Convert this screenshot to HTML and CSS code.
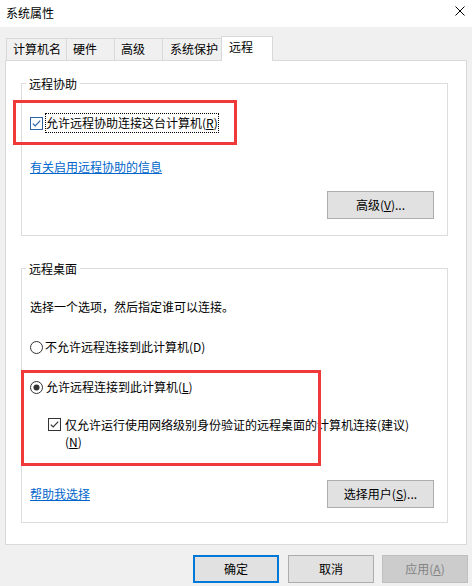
FILE: index.html
```html
<!DOCTYPE html>
<html lang="zh-CN">
<head>
<meta charset="utf-8">
<title>系统属性</title>
<link rel="stylesheet" href="styles.css">
</head>
<body>
<div class="window">
  <header class="titlebar">
    <span class="title">系统属性</span>
    <svg class="close" width="10" height="10" viewBox="0 0 10 10"><path d="M0.5 0.5L9.5 9.5M9.5 0.5L0.5 9.5" stroke="#000" stroke-width="1"/></svg>
  </header>

  <nav class="tabs">
    <div class="tab t-name">计算机名</div>
    <div class="tab t-hw">硬件</div>
    <div class="tab t-adv">高级</div>
    <div class="tab t-prot">系统保护</div>
    <div class="tab active">远程</div>
  </nav>

  <main class="panel">
    <fieldset class="group g-assist">
      <legend>远程协助</legend>
      <div class="option check-row">
        <svg class="box" width="13" height="13" viewBox="0 0 13 13"><rect x="0.5" y="0.5" width="12" height="12" fill="#fff" stroke="#2b63a6"/><path d="M2.8 6.6L5.2 9L10.2 3.6" fill="none" stroke="#2b63a6" stroke-width="1.2"/></svg>
        <span class="focus">允许远程协助连接这台计算机(<u>R</u>)</span>
      </div>
      <a class="link link-info" href="#">有关启用远程协助的信息</a>
      <div class="btn-row">
        <button class="btn">高级(<u>V</u>)...</button>
      </div>
    </fieldset>

    <fieldset class="group g-desktop">
      <legend>远程桌面</legend>
      <p class="desc">选择一个选项，然后指定谁可以连接。</p>
      <div class="option radio-row r-off">
        <svg class="box" width="13" height="13" viewBox="0 0 13 13"><circle cx="6.5" cy="6.5" r="6" fill="#fff" stroke="#333"/></svg>
        <span>不允许远程连接到此计算机(D)</span>
      </div>
      <div class="option radio-row r-on">
        <svg class="box" width="13" height="13" viewBox="0 0 13 13"><circle cx="6.5" cy="6.5" r="6" fill="#fff" stroke="#333"/><circle cx="6.5" cy="6.5" r="3" fill="#333"/></svg>
        <span>允许远程连接到此计算机(<u>L</u>)</span>
      </div>
      <div class="option nla-row">
        <svg class="box" width="13" height="13" viewBox="0 0 13 13"><rect x="0.5" y="0.5" width="12" height="12" fill="#fff" stroke="#333"/><path d="M2.8 6.6L5.2 9L10.2 3.6" fill="none" stroke="#333" stroke-width="1.2"/></svg>
        <span class="nla-text">仅允许运行使用网络级别身份验证的远程桌面的计算机连接(建议)<br>(<u>N</u>)</span>
      </div>
      <div class="btn-row split">
        <a class="link" href="#">帮助我选择</a>
        <button class="btn">选择用户(<u>S</u>)...</button>
      </div>
    </fieldset>
  </main>

  <footer class="actions">
    <button class="btn primary">确定</button>
    <button class="btn cancel">取消</button>
    <button class="btn disabled">应用(<u>A</u>)</button>
  </footer>

  <div class="mark mark-assist"></div>
  <div class="mark mark-desktop"></div>
</div>
</body>
</html>
```

FILE: styles.css
```css
* { box-sizing: border-box; }

html, body {
  margin: 0;
  padding: 0;
}

body {
  background: #f0f0f0;
  font-family: "Noto Sans CJK SC", "Microsoft YaHei", sans-serif;
  font-size: 12px;
  line-height: 16px;
  color: #000;
}

.window {
  position: relative;
  width: 472px;
  height: 586px;
  overflow: hidden;
  background: #f0f0f0;
}

.titlebar {
  height: 27px;
  background: #fff;
  display: flex;
  align-items: center;
  justify-content: space-between;
  padding: 0 7px 1px 6px;
}

.title { line-height: 16px; }

.close { display: block; margin-top: -5px; }

.tabs {
  display: flex;
  align-items: flex-end;
  height: 24px;
  margin: 9px 0 0 6px;
}

.tab {
  height: 22px;
  border-top: 1px solid #d9d9d9;
  border-left: 1px solid #d9d9d9;
  padding: 2px 0 0 6px;
  background: #f0f0f0;
  white-space: nowrap;
}

.t-name { width: 60px; }
.t-hw { width: 48px; }
.t-adv { width: 48px; }
.t-prot { width: 59px; padding-left: 7px; }

.tab.active {
  position: relative;
  z-index: 1;
  width: 52px;
  height: 25px;
  margin-bottom: -1px;
  padding: 2px 0 0 7px;
  background: #fff;
  border-right: 1px solid #d9d9d9;
}

.panel {
  display: block;
  margin-left: 5px;
  width: 462px;
  height: 485px;
  background: #fff;
  border: 1px solid #d9d9d9;
  padding: 14px 0 0 15px;
}

.group {
  margin: 0;
  width: 427px;
  border: 1px solid #dcdcdc;
  padding: 0 13px 16px 8px;
  min-width: 0;
}

.group legend {
  padding: 0 3px;
  margin-left: -4px;
  line-height: 17px;
}

.g-desktop {
  margin-top: 24px;
  padding-bottom: 14px;
}

.option {
  display: flex;
  align-items: center;
}

.box { flex: none; display: block; }

.check-row {
  margin-top: 21px;
  height: 20px;
}

.check-row .box { margin-right: 2px; }

.focus {
  border: 1px dotted #000;
  padding: 1px 0 1px 0;
  line-height: 16px;
}

.link {
  color: #0066cc;
  text-decoration: underline;
}

.link-info {
  display: block;
  width: max-content;
  margin-top: 26px;
}

.btn-row {
  display: flex;
  justify-content: flex-end;
  margin-top: 16px;
}

.btn-row.split {
  justify-content: space-between;
  align-items: center;
  margin-top: 30px;
}

.btn {
  font: inherit;
  line-height: 16px;
  width: 107px;
  height: 28px;
  padding: 0;
  margin: 0;
  background: #e1e1e1;
  border: 1px solid #adadad;
  color: #000;
}

.desc {
  margin: 22px 0 0;
}

.radio-row {
  margin-top: 24px;
  height: 16px;
}

.radio-row .box { margin-right: 2px; }
.r-on .box { margin-right: 3px; }

.nla-row {
  margin: 21px 0 0 18px;
  align-items: flex-start;
}

.nla-row .box { margin: 2px 4px 0 0; }

.nla-text { line-height: 17px; }

.actions {
  display: flex;
  justify-content: flex-end;
  margin-top: 10px;
  padding-right: 4px;
}

.actions .btn { width: 86px; }

.btn.primary {
  border: 2px solid #0078d7;
  margin-right: 9px;
}

.btn.cancel { margin-right: 8px; }

.btn.disabled {
  background: #cccccc;
  border-color: #bfbfbf;
  color: #838383;
}

.mark {
  position: absolute;
  border: 3px solid #f03a3a;
  pointer-events: none;
}

.mark-assist {
  left: 13px;
  top: 100px;
  width: 224px;
  height: 45px;
}

.mark-desktop {
  left: 21px;
  top: 370px;
  width: 300px;
  height: 96px;
}
```
